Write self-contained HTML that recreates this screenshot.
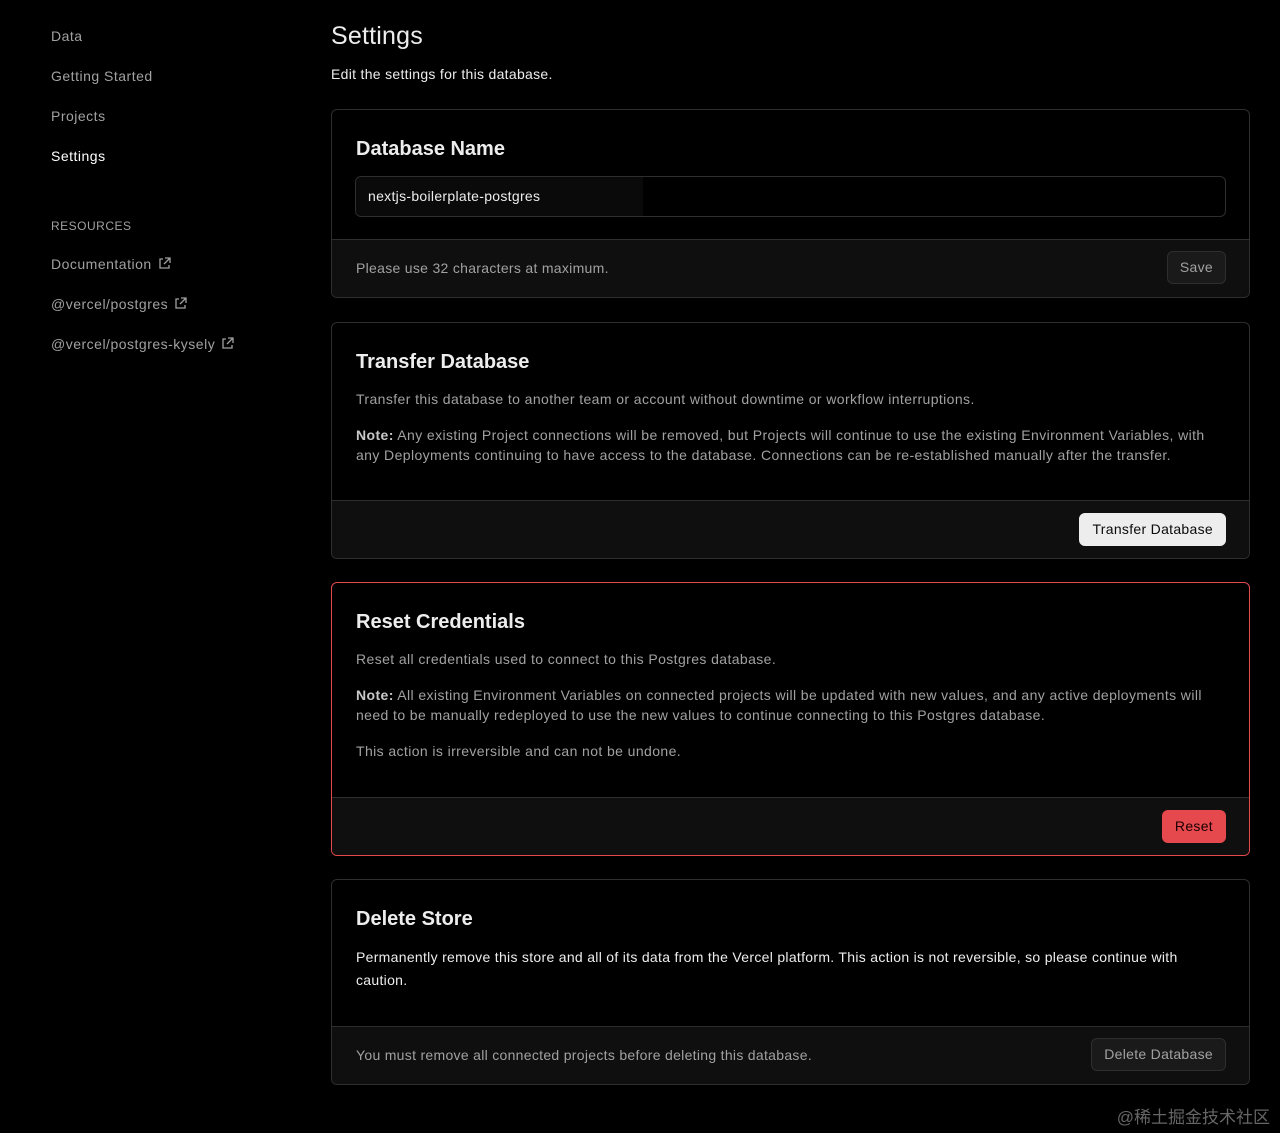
<!DOCTYPE html>
<html><head><meta charset="utf-8"><style>
*{box-sizing:border-box;margin:0;padding:0}
body{width:1280px;height:1133px;background:#000;font-family:"Liberation Sans",sans-serif;color:#ededed;position:relative;overflow:hidden;letter-spacing:0.3px}
.nav{position:absolute;left:51px;font-size:14px;color:#a1a1a1;letter-spacing:0.5px}
.nav svg{vertical-align:-1px;margin-left:6px}
h1{position:absolute;left:331px;top:22px;font-size:25px;font-weight:500;color:#ededed;letter-spacing:0.2px}
.sub{position:absolute;left:331px;top:66px;font-size:14px;color:#ededed}
.card{position:absolute;left:331px;width:919px;border:1px solid #2e2e2e;border-radius:6px;background:#000;overflow:hidden}
.card.red{border-color:#e5484d}
.card h2{position:absolute;left:24px;font-size:20px;font-weight:600;color:#ededed;letter-spacing:0}
.card p{position:absolute;left:24px;right:30px;font-size:14px;color:#a1a1a1;line-height:20px;letter-spacing:0.4px}
.card p b{color:#c8c8c8}
.foot{position:absolute;left:0;right:0;bottom:0;background:#0f0f0f;border-top:1px solid #2e2e2e}
.foot span{position:absolute;left:24px;font-size:14px;color:#a1a1a1}
.btn{position:absolute;right:23px;height:33px;border-radius:6px;font-size:14px;line-height:31px;padding:0 12px;border:1px solid #2e2e2e;background:#1a1a1a;color:#a1a1a1}
</style></head><body>
<div class="nav" style="top:28px">Data</div>
<div class="nav" style="top:68px">Getting Started</div>
<div class="nav" style="top:108px">Projects</div>
<div class="nav" style="top:148px;color:#fff;font-weight:500">Settings</div>
<div class="nav" style="top:219px;font-size:12px">RESOURCES</div>
<div class="nav" style="top:256px">Documentation<svg width="13" height="13" viewBox="0 0 13 13" fill="none" stroke="#a1a1a1" stroke-width="1.3"><path d="M5 2H2v9h9V8M7 1h5v5M12 1L6 7"/></svg></div>
<div class="nav" style="top:296px">@vercel/postgres<svg width="13" height="13" viewBox="0 0 13 13" fill="none" stroke="#a1a1a1" stroke-width="1.3"><path d="M5 2H2v9h9V8M7 1h5v5M12 1L6 7"/></svg></div>
<div class="nav" style="top:336px">@vercel/postgres-kysely<svg width="13" height="13" viewBox="0 0 13 13" fill="none" stroke="#a1a1a1" stroke-width="1.3"><path d="M5 2H2v9h9V8M7 1h5v5M12 1L6 7"/></svg></div>

<h1>Settings</h1>
<div class="sub">Edit the settings for this database.</div>

<div class="card" style="top:109px;height:189px">
<h2 style="top:28px">Database Name</h2>
<div style="position:absolute;left:23px;top:66px;width:871px;height:41px;border:1px solid #2e2e2e;border-radius:6px;background:#000">
<div style="position:absolute;left:0;top:0;width:287px;height:39px;background:#0a0a0a;border-radius:6px 0 0 6px"></div>
<span style="position:absolute;left:12px;top:11px;font-size:14px;color:#ededed">nextjs-boilerplate-postgres</span></div>
<div class="foot" style="height:58px"><span style="top:20px">Please use 32 characters at maximum.</span><div class="btn" style="top:11px">Save</div></div>
</div>

<div class="card" style="top:322px;height:237px">
<h2 style="top:28px">Transfer Database</h2>
<p style="top:66px">Transfer this database to another team or account without downtime or workflow interruptions.</p>
<p style="top:102px"><b>Note:</b> Any existing Project connections will be removed, but Projects will continue to use the existing Environment Variables, with any Deployments continuing to have access to the database. Connections can be re-established manually after the transfer.</p>
<div class="foot" style="height:58px"><div class="btn" style="top:12px;background:#ededed;color:#0a0a0a;border-color:#ededed;font-weight:500">Transfer Database</div></div>
</div>

<div class="card red" style="top:582px;height:274px">
<h2 style="top:28px">Reset Credentials</h2>
<p style="top:66px">Reset all credentials used to connect to this Postgres database.</p>
<p style="top:102px"><b>Note:</b> All existing Environment Variables on connected projects will be updated with new values, and any active deployments will need to be manually redeployed to use the new values to continue connecting to this Postgres database.</p>
<p style="top:158px">This action is irreversible and can not be undone.</p>
<div class="foot" style="height:58px"><div class="btn" style="top:12px;background:#e5484d;color:#1a0000;border-color:#e5484d;font-weight:500">Reset</div></div>
</div>

<div class="card" style="top:879px;height:206px">
<h2 style="top:28px">Delete Store</h2>
<p style="top:66px;color:#ededed;line-height:23px;right:40px;letter-spacing:0.3px">Permanently remove this store and all of its data from the Vercel platform. This action is not reversible, so please continue with caution.</p>
<div class="foot" style="height:58px"><span style="top:20px">You must remove all connected projects before deleting this database.</span><div class="btn" style="top:11px">Delete Database</div></div>
</div>

<div style="position:absolute;right:10px;top:1103px;font-size:17px;color:#666;letter-spacing:0;font-family:'Liberation Sans','Noto Sans CJK SC',sans-serif">@稀土掘金技术社区</div>
</body></html>
